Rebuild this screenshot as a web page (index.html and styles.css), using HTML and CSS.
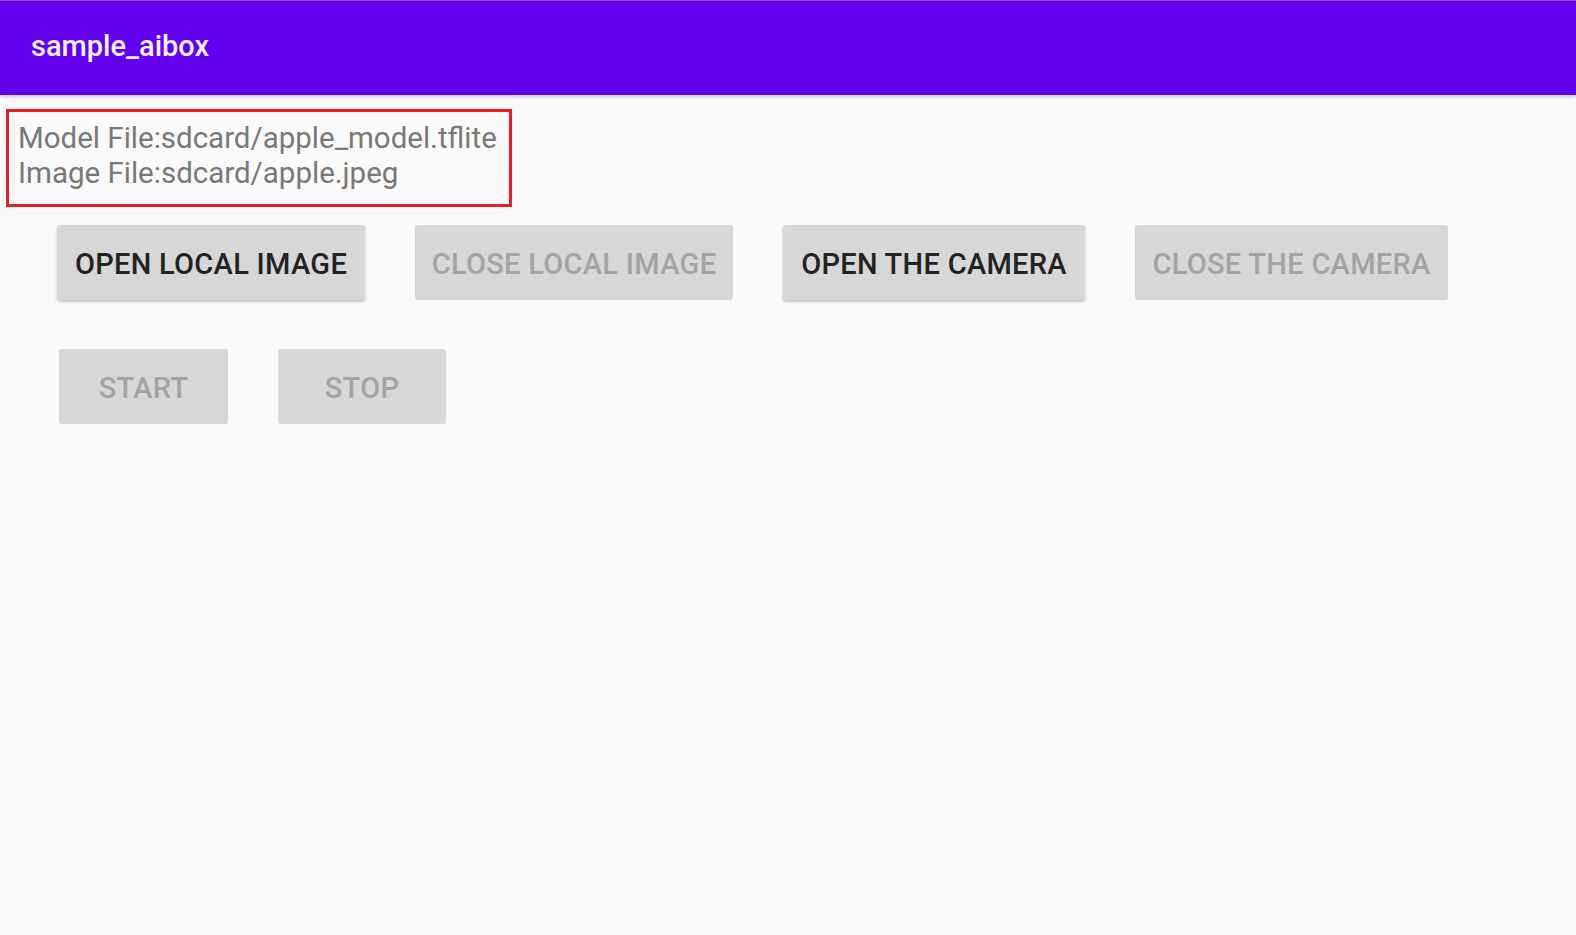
FILE: index.html
```html
<!DOCTYPE html>
<html>
<head>
<meta charset="utf-8">
<link rel="stylesheet" href="styles.css">
</head>
<body>
<header class="appbar"><span class="title">sample_aibox</span></header>
<main class="content">
  <div class="info">
    <div class="line">Model File:sdcard/apple_model.tflite</div>
    <div class="line">Image File:sdcard/apple.jpeg</div>
  </div>
  <div class="row row1">
    <button class="btn on w1">OPEN LOCAL IMAGE</button>
    <button class="btn off w2">CLOSE LOCAL IMAGE</button>
    <button class="btn on w3">OPEN THE CAMERA</button>
    <button class="btn off w4">CLOSE THE CAMERA</button>
  </div>
  <div class="row row2">
    <button class="btn off w5">START</button>
    <button class="btn off w5">STOP</button>
  </div>
</main>
</body>
</html>
```
FILE: styles.css
```css
html, body {
  margin: 0;
  padding: 0;
  height: 100%;
  background: #fafafa;
  font-family: Roboto, "Liberation Sans", sans-serif;
}
.appbar {
  height: 95px;
  background: #6200ee;
  border-top: 1px solid #8a4cf2;
  box-sizing: border-box;
  display: flex;
  align-items: center;
  padding-left: 31px;
  box-shadow: 0 2px 4px rgba(0,0,0,0.18);
  position: relative;
}
.title {
  color: #f6efff;
  font-size: 29px;
  font-weight: 500;
  margin-top: -4px;
}
.content {
  padding-top: 14px;
}
.info {
  margin-left: 6px;
  width: 506px;
  height: 98px;
  box-sizing: border-box;
  border: 3px solid #ec1c24;
  padding: 9px 0 0 9px;
  color: #787878;
  font-size: 29.5px;
  line-height: 35px;
}
.row {
  display: flex;
  gap: 50px;
  margin-left: 57px;
}
.row1 {
  margin-top: 18px;
}
.row2 {
  margin-top: 49px;
  margin-left: 59px;
}
.btn {
  height: 75px;
  border: none;
  border-radius: 3px;
  background: #d7d7d7;
  font-family: Roboto, "Liberation Sans", sans-serif;
  font-size: 29px;
  font-weight: 500;
  letter-spacing: 0.3px;
  padding: 2px 0 0 0;
  display: flex;
  align-items: center;
  justify-content: center;
}
.on {
  color: #222222;
  box-shadow: 0 2px 3px rgba(0,0,0,0.22);
}
.off {
  color: #a3a3a3;
}
.w1 { width: 308px; }
.w2 { width: 318px; }
.w3 { width: 302px; }
.w4 { width: 313px; }
.w5 { width: 169px; }
.row2 .w5 + .w5 { width: 168px; }
```
